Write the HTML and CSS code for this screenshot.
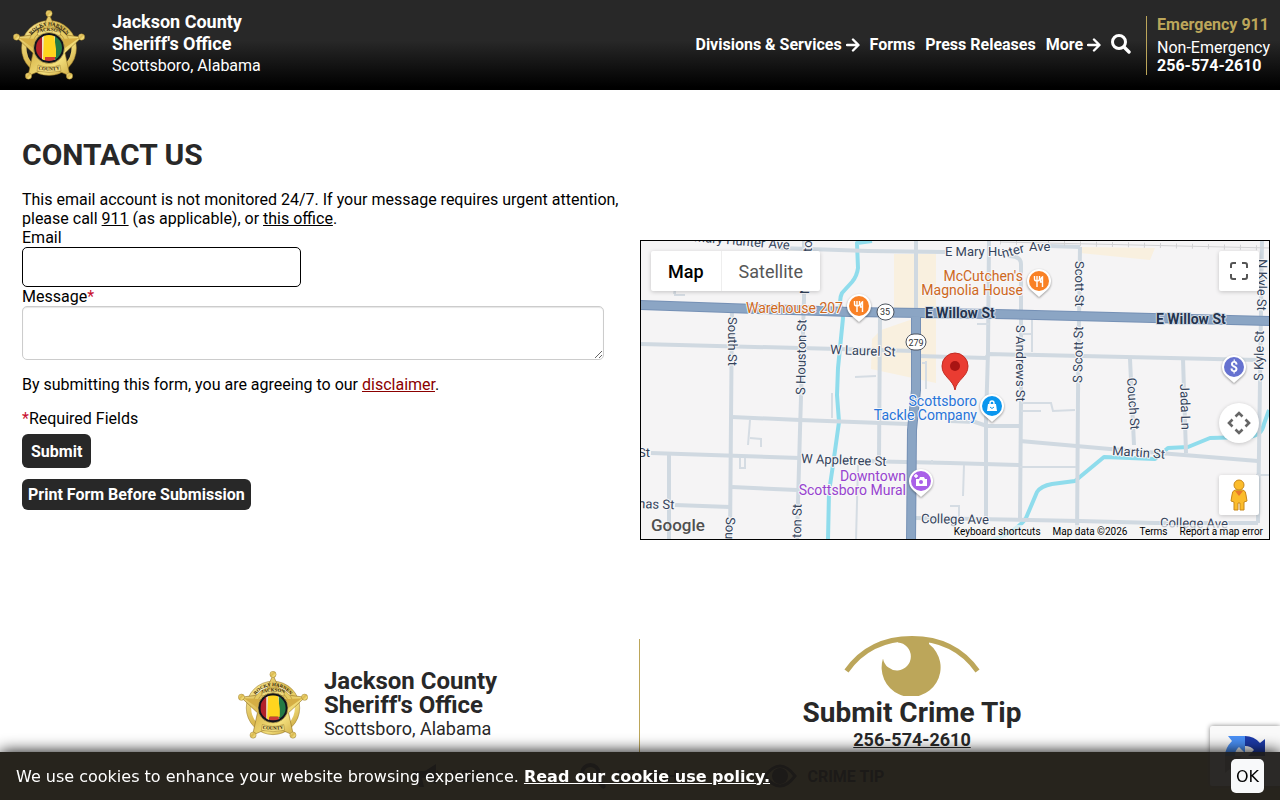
FILE: index.html
```html
<!DOCTYPE html>
<html lang="en">
<head>
    <meta charset="UTF-8">
    <meta name="viewport" content="width=device-width, initial-scale=1.0">
    <title>Contact Us - Jackson County Sheriff's Office</title>
    <link rel="stylesheet" href="styles.css">
</head>
<body>

<!-- Shared badge artwork -->
<svg class="defs" width="0" height="0" aria-hidden="true">
    <defs>
        <linearGradient id="gold" x1="0" y1="0" x2="1" y2="1">
            <stop offset="0" stop-color="#f8ea98"/>
            <stop offset=".45" stop-color="#dbb94f"/>
            <stop offset=".7" stop-color="#f3df7c"/>
            <stop offset="1" stop-color="#c29a33"/>
        </linearGradient>
        <clipPath id="seal-clip"><circle cx="36" cy="38" r="13"/></clipPath>
        <path id="arc-top" d="M14.500 37 A21.500 21.500 0 0 1 57.500 37"/>
        <path id="arc-mid" d="M22 24 Q36 18 50 24"/>
        <path id="arc-low" d="M23 59 Q36 62 49 59"/>
        <symbol id="badge" viewBox="0 0 72 70">
            <circle cx="36" cy="38" r="25" fill="none" stroke="url(#gold)" stroke-width="5"/>
            <circle cx="36" cy="38" r="27.500" fill="none" stroke="#8d6d20" stroke-width=".5"/>
            <path d="M36 4 L45 24 L69 27 L52 43 L57 66 L36 57 L15 66 L20 43 L3 27 L27 24 Z" fill="url(#gold)" stroke="#8d6d20" stroke-width=".6"/>
            <path d="M15 32 A22 22 0 0 1 57 32 L52 31 A17 17 0 0 0 20 31 Z" fill="#e6cb62" stroke="#8d6d20" stroke-width=".4"/>
            <path d="M6 28 L24 29 L20 38 Z M66 28 L48 29 L52 38 Z" fill="#d5ae44"/>
            <g fill="url(#gold)" stroke="#8d6d20" stroke-width=".4">
                <circle cx="36" cy="3.500" r="3.200"/><circle cx="3.500" cy="27" r="3.200"/><circle cx="68.500" cy="27" r="3.200"/>
                <circle cx="15.500" cy="66" r="3.200"/><circle cx="56.500" cy="66" r="3.200"/>
            </g>
            <path d="M24 21 Q36 16 48 21 L47 26 Q36 21 25 26 Z M25 55 Q36 59 47 55 L48 61 Q36 64 24 61 Z" fill="#efd97c" stroke="#8d6d20" stroke-width=".4"/>
            <circle cx="36" cy="38" r="15.500" fill="#11131c" stroke="#d9bd58" stroke-width=".7"/>
            <g clip-path="url(#seal-clip)">
                <path d="M23 25h8v26h-8z" fill="#b3202a"/>
                <path d="M29 25h3v26h-3zM41 25h2v26h-2z" fill="#eee3c8"/>
                <path d="M42 25h8v26h-8z" fill="#237a45"/>
                <path d="M31 25h10l2 14v8H33l-1 3h-2z" fill="#ffd51e"/>
                <path d="M32 47h10v4H32z" fill="#cf3f36"/>
            </g>
            <g class="badge-text">
                <text><textPath href="#arc-top" startOffset="50%">ROCKY HARNEN</textPath></text>
                <text><textPath href="#arc-mid" startOffset="50%">JACKSON</textPath></text>
                <text><textPath href="#arc-low" startOffset="50%">COUNTY</textPath></text>
            </g>
        </symbol>
        <symbol id="arrow" viewBox="0 0 14 14">
            <path d="M1 7h11M7 1.500l5.500 5.500-5.500 5.500" fill="none" stroke="currentColor" stroke-width="2.400" stroke-linecap="round" stroke-linejoin="round"/>
        </symbol>
        <symbol id="search" viewBox="0 0 20 20">
            <circle cx="8" cy="8" r="6.500" fill="none" stroke="currentColor" stroke-width="3"/>
            <path d="M13 13l5 5" stroke="currentColor" stroke-width="3.400" stroke-linecap="round"/>
        </symbol>
    </defs>
</svg>

<header class="site-header">
    <a class="brand" href="#">
        <svg class="badge"><use href="#badge"/></svg>
        <span class="brand-text"><strong>Jackson County<br>Sheriff's Office</strong><span>Scottsboro, Alabama</span></span>
    </a>
    <nav class="main-nav">
        <a href="#">Divisions &amp; Services <svg class="arrow"><use href="#arrow"/></svg></a>
        <a href="#">Forms</a>
        <a href="#">Press Releases</a>
        <a href="#">More <svg class="arrow"><use href="#arrow"/></svg></a>
        <a href="#" aria-label="Search"><svg class="search"><use href="#search"/></svg></a>
    </nav>
    <div class="phones">
        <a class="emergency" href="tel:911">Emergency 911</a>
        <a class="non-emergency" href="tel:2565742610">Non-Emergency<br><strong>256-574-2610</strong></a>
    </div>
</header>

<main class="contact">
    <section class="contact-form">
        <h1>CONTACT US</h1>
        <form>
            <p class="intro">This email account is not monitored 24/7. If your message requires urgent attention, please call <a href="tel:911">911</a> (as applicable), or <a href="#">this office</a>.</p>
            <label for="email">Email</label>
            <input type="email" id="email">
            <label for="message">Message<span class="star">*</span></label>
            <textarea id="message"></textarea>
            <p>By submitting this form, you are agreeing to our <a class="disclaimer" href="#">disclaimer</a>.</p>
            <p><span class="star">*</span>Required Fields</p>
            <button class="btn btn-submit" type="submit">Submit</button>
            <button class="btn btn-print" type="button">Print Form Before Submission</button>
        </form>
    </section>

    <section class="map">
        <svg class="map-art" viewBox="641 241 628 298" preserveAspectRatio="xMidYMid slice">
            <path fill="#f5f4f5" d="M641 241h628v298H641z"/>
            <path class="area" d="M894 254h42v57h-42zM881 330l55-19v72l-65-14 1-30zM1078 247l77 1-5 12-70-7z"/>

            <!-- Water -->
            <g class="water">
                <path d="M872 241L857 243L858 268Q857 276 852 282L842 293Q839 299 841 306L843 318L838 368L837 395L839 422L833 465L829 492L828 540"/>
                <path d="M990 541Q1018 531 1026 518L1037 492Q1041 486 1052 484L1075 481L1104 457L1155 459L1168 448L1188 447L1210 438L1248 437Q1262 436 1264 424L1269 410"/>
            </g>

            <!-- Side streets -->
            <g class="road">
                <path d="M780 248L868 251L945 252M1050 246L1080 247"/>
                <path d="M804 241V300L800 430L797 540M732 305L731 420L730 540M669 455V540M916 241V312M880 315L879 457"/>
                <path d="M641 344L915 351M918 356L986 358L989 354L1258 360M732 417L800 420L908 424M950 421L975 422L987 426L1020 426"/>
                <path d="M651 453L800 458M860 461L950 463L1020 465M732 487L797 490M675 505L730 507"/>
                <path d="M989 241L988 352L986 420V519M1008 256Q1021 256 1021 264V400L1020 519M1080 247L1078 395L1077 540M1262 241L1258 523"/>
                <path d="M1130 359L1134 445M1183 359L1186 453M1020 441L1110 449L1258 461M915 518L1080 521L1155 523H1258"/>
            </g>
            <g class="lane">
                <path d="M674 294l2-10M675 287v8h10M855 377l21-1M832 393v25M750 420l-2 25M750 438l11 1v8M740 458v11M741 468h4v-10M858 465l-2 75"/>
                <path d="M932 463v-3M964 465l-1 31M950 506h9v12M926 361v28M926 363h-4M977 324h12M1032 318v34M1021 334h11M1021 403h30l2 8 22-1M1021 411h20M1020 467h56M1256 475h14"/>
            </g>
            <g class="rail">
                <path d="M1000 242L1270 248"/>
                <path stroke-dasharray="1 15" stroke-width="5" d="M1000 242L1270 248"/>
            </g>

            <!-- Highways -->
            <path class="highway-edge" d="M639 305L850 312L995 314L1271 321M916 312V390L912 430L911 541"/>
            <path class="highway" d="M639 305L850 312L995 314L1271 321M916 312V390L912 430L911 541"/>

            <g class="shield">
                <rect x="877" y="304" width="17" height="16" rx="8"/><text x="885" y="315">35</text>
                <rect x="906" y="334" width="20" height="16" rx="8"/><text x="916" y="346">279</text>
            </g>

            <!-- Street names -->
            <g class="street">
                <text transform="translate(679 240) rotate(5)">W Mary Hunter Ave</text>
                <text x="945" y="256">E Mary Hu</text><text transform="translate(1003 258) rotate(-15)">nter</text><text x="1029" y="251">Ave</text>
                <text x="830" y="354" transform="rotate(2 830 354)">W Laurel St</text>
                <text x="801" y="463" transform="rotate(2 801 463)">W Appletree St</text>
                <text x="638" y="457">St</text><text x="638" y="508" transform="rotate(2 638 508)">nas St</text>
                <text x="921" y="523" transform="rotate(1 921 523)">College Ave</text><text x="1160" y="527" transform="rotate(1 1160 527)">College Ave</text>
                <text x="1112" y="455" transform="rotate(4 1112 455)">Martin St</text>
                <text transform="translate(728 317) rotate(90)">South St</text>
                <text transform="translate(805 395) rotate(-89)">S Houston St</text>
                <text transform="translate(812 252) rotate(-90)">to</text><text transform="translate(809 294) rotate(-90)">N</text>
                <text transform="translate(726 517) rotate(92)">South St</text>
                <text transform="translate(801 538) rotate(-89)">ton St</text>
                <text transform="translate(1016 325) rotate(90)">S Andrews St</text>
                <text transform="translate(1075 261) rotate(90)">Scott St</text><text transform="translate(1082 383) rotate(-89)">S Scott St</text>
                <text transform="translate(1258 259) rotate(91)">N Kyle St</text><text transform="translate(1263 381) rotate(-89)">S Kyle St</text>
                <text transform="translate(1127 378) rotate(86)">Couch St</text><text transform="translate(1180 384) rotate(88)">Jada Ln</text>
            </g>
            <g class="street major">
                <text x="925" y="318">E Willow St</text><text x="1156" y="324">E Willow St</text>
            </g>

            <!-- Places -->
            <g class="place food">
                <text x="843" y="313">Warehouse 207</text>
                <text x="1023" y="281">McCutchen's</text><text x="1023" y="295">Magnolia House</text>
            </g>
            <g class="place shop"><text x="977" y="406">Scottsboro</text><text x="977" y="420">Tackle Company</text></g>
            <g class="place art"><text x="906" y="481">Downtown</text><text x="906" y="495">Scottsboro Mural</text></g>

            <g class="pin"><path d="M859 322l-8-7a12 12 0 1 1 16 0z"/><circle cx="859" cy="306" r="10" fill="#f98125"/>
                <path d="M854.500 301v3q0 2 2.500 2t2.500-2v-3M857 301v11M862.500 312v-10q-2 1-2 5h2" class="glyph"/></g>
            <g class="pin"><path d="M1039 297l-8-7a12 12 0 1 1 16 0z"/><circle cx="1039" cy="281" r="10" fill="#f98125"/>
                <path d="M1034.500 276v3q0 2 2.500 2t2.500-2v-3M1037 276v11M1042.500 287v-10q-2 1-2 5h2" class="glyph"/></g>
            <g class="pin"><path d="M992 422l-8-7a12 12 0 1 1 16 0z"/><circle cx="992" cy="406" r="10" fill="#0b96ee"/>
                <path d="M988 404h8l1 7h-10z" fill="#fff"/><path d="M990 404v-1q0-2 2-2t2 2v1" class="glyph"/><path d="M990 407q2 3 4 0" fill="none" stroke="#0b96ee"/></g>
            <g class="pin"><path d="M921 497l-8-7a12 12 0 1 1 16 0z"/><circle cx="921" cy="481" r="10" fill="#a960e8"/>
                <path d="M916 479h3l1-2h4l1 2h2v7h-11z" fill="#fff"/><circle cx="921" cy="482" r="2" fill="#a960e8"/><path d="M916 474v4M914 476h4" class="glyph"/></g>
            <g class="pin"><path d="M1234 383l-8-7a12 12 0 1 1 16 0z"/><circle cx="1234" cy="367" r="10" fill="#6672d0"/>
                <text class="dollar" x="1234" y="372">$</text></g>

            <!-- Office marker -->
            <path d="M955 390C953 379 942 377 942 366a13 13 0 0 1 26 0C968 377 957 379 955 390z" fill="#ea3c32" stroke="#c22b22"/>
            <circle cx="955" cy="366" r="5" fill="#a91413"/>
        </svg>

        <div class="map-types">
            <button class="map-type active" type="button">Map</button>
            <button class="map-type" type="button">Satellite</button>
        </div>
        <button class="map-btn fullscreen" type="button" aria-label="Toggle fullscreen view">
            <svg width="18" height="18" viewBox="0 0 18 18"><path d="M1 6V3q0-2 2-2h3M12 1h3q2 0 2 2v3M17 12v3q0 2-2 2h-3M6 17H3q-2 0-2-2v-3" fill="none" stroke="#555" stroke-width="2"/></svg>
        </button>
        <button class="map-btn camera" type="button" aria-label="Map camera controls">
            <svg width="24" height="24" viewBox="0 0 24 24"><path d="M8.500 5.500L12 2l3.500 3.500M8.500 18.500L12 22l3.500-3.500M5.500 8.500L2 12l3.500 3.500M18.500 8.500L22 12l-3.500 3.500" fill="none" stroke="#666" stroke-width="2.600"/></svg>
        </button>
        <button class="map-btn pegman" type="button" aria-label="Street View">
            <svg width="18" height="32" viewBox="0 0 18 32"><path d="M5 11h8q3 1 3 5l1 6-3 1v8H10v-7H8v7H4v-8l-3-1 1-6q0-4 3-5z" fill="#fbbc2b" stroke="#c8871a"/><path d="M5 12l4 5 4-5z" fill="#e8792b"/><circle cx="9" cy="6" r="5" fill="#fbbc2b" stroke="#c8871a"/></svg>
        </button>
        <span class="google">Google</span>
        <div class="map-legal">
            <button type="button">Keyboard shortcuts</button>
            <span>Map data ©2026</span>
            <a href="#">Terms</a>
            <a href="#">Report a map error</a>
        </div>
    </section>
</main>

<footer class="site-footer">
    <a class="footer-brand" href="#">
        <svg class="badge"><use href="#badge"/></svg>
        <span class="brand-text"><strong>Jackson County<br>Sheriff's Office</strong><span>Scottsboro, Alabama</span></span>
    </a>
    <div class="crime-tip">
        <svg width="136" height="60" viewBox="0 0 136 60">
            <path d="M2.500 35C18 13 41 2.500 68 2.500S118 13 133.500 35" fill="none" stroke="#bca65a" stroke-width="5"/>
            <path d="M54 3h31v5A29.500 29.500 0 1 1 39 22.500A14 14 0 1 0 54 6.500z" fill="#bca65a"/>
        </svg>
        <a class="tip-title" href="#">Submit Crime Tip</a>
        <a class="tip-phone" href="tel:2565742610">256-574-2610</a>
    </div>
</footer>


<nav class="quick-links">
    <a href="#"><svg width="28" height="26" viewBox="0 0 28 26"><path d="M1 8h12l11-7v20l-11-6h-3l2 9H7L5 15H1zM25 7q4 4 0 8" fill="currentColor"/></svg>NEWS</a>
    <a href="#"><svg width="26" height="26"><use href="#search"/></svg>SEARCH</a>
    <a href="#"><svg width="34" height="24" viewBox="0 0 34 24"><path d="M2 12Q17-8 32 12Q17 32 2 12z" fill="none" stroke="currentColor" stroke-width="3"/><circle cx="17" cy="12" r="8" fill="currentColor"/></svg>CRIME TIP</a>
</nav>

<div class="recaptcha">
    <svg width="40" height="40" viewBox="0 0 40 40">
        <path d="M20 0q9 0 15 7l5-4v17H23l6-6q-3-4-9-4z" fill="#1c3aa9"/>
        <path d="M0 20Q0 12 7 5L3 0h17v17l-6-6q-4 3-4 9z" fill="#4a90f5"/>
        <path d="M0 20h17l-6 6q4 4 9 4 4 0 7-4l7 6q-6 8-14 8-9 0-15-7l-5 4z" fill="#ababab"/>
    </svg>
</div>

<div class="cookie-bar">
    <p>We use cookies to enhance your website browsing experience. <a href="#">Read our cookie use policy.</a></p>
    <button type="button">OK</button>
</div>

</body>
</html>
```
FILE: styles.css
```css
* {
    box-sizing: border-box;
}

body {
    margin: 0;
    font-family: Roboto, "Liberation Sans", sans-serif;
    font-size: 16px;
    line-height: 19px;
    color: #000;
    background-color: #fff;
}

a {
    color: inherit;
}

button {
    font-family: inherit;
    cursor: pointer;
}

.defs {
    position: absolute;
}

.badge-text {
    font-family: "Liberation Serif", serif;
    font-size: 5px;
    font-weight: bold;
    text-anchor: middle;
    fill: #34270c;
}

/* Header */
.site-header {
    display: flex;
    align-items: center;
    height: 90px;
    padding: 0 10px 0 13px;
    color: #fff;
    background: linear-gradient(#282828 0%, #282828 45%, #000 97%);
}

.site-header a {
    text-decoration: none;
}

.brand {
    display: flex;
    align-items: center;
    gap: 27px;
    margin-right: auto;
}

.brand .badge {
    width: 72px;
    height: 70px;
}

.brand-text {
    padding-bottom: 3px;
    font-size: 16px;
    line-height: 22px;
}

.brand-text strong,
.brand-text span {
    display: block;
}

.brand-text strong {
    font-size: 18px;
}

.main-nav {
    display: flex;
    align-items: center;
    gap: 10px;
    padding-bottom: 2px;
    font-weight: bold;
}

.main-nav .arrow {
    width: 14px;
    height: 14px;
    vertical-align: -2px;
}

.main-nav .search {
    display: block;
    width: 20px;
    height: 20px;
}

.phones {
    display: flex;
    flex-direction: column;
    gap: 5px;
    margin-left: 15px;
    padding-left: 10px;
    border-left: 1px solid #bca65a;
    line-height: 18px;
}

.emergency {
    color: #bca65a;
    font-weight: bold;
}

/* Contact */
.contact {
    display: grid;
    grid-template-columns: 1fr 1fr;
    align-items: start;
}

.contact-form {
    padding: 47px 10px 0 22px;
}

h1 {
    margin: 0 0 17px;
    font-size: 30px;
    line-height: 36px;
    color: #282828;
}

.contact-form p {
    margin: 15px 0;
}

.contact-form .intro {
    margin: 0;
}

.contact-form label {
    display: block;
}

.contact-form input,
.contact-form textarea {
    display: block;
    border-radius: 5px;
    font: inherit;
    background-color: #fff;
}

.contact-form input {
    width: 279px;
    height: 40px;
    border: 1px solid #000;
}

.contact-form textarea {
    width: 582px;
    max-width: 100%;
    height: 54px;
    border: 1px solid #ccc;
    box-shadow: inset 0 1px 1px rgba(0,0,0,0.1);
}

.star {
    color: #c8102e;
}

.disclaimer {
    color: #8b0000;
}

.contact-form p:last-of-type {
    margin-bottom: 6px;
}

.btn {
    display: block;
    border: 0;
    border-radius: 6px;
    font-size: 16px;
    font-weight: bold;
    color: #fff;
    background-color: #282828;
}

.btn-submit {
    height: 34px;
    margin-bottom: 11px;
    padding: 0 9px;
}

.btn-print {
    height: 31px;
    padding: 0 6px;
}

/* Map */
.map {
    position: relative;
    height: 300px;
    margin: 150px 10px 0 0;
    border: 1px solid #000;
    overflow: hidden;
}

.map-art {
    display: block;
    width: 100%;
    height: 100%;
}

.area {
    fill: #f9f0df;
}

.water {
    fill: none;
    stroke: #8fdcec;
    stroke-width: 4;
    stroke-linejoin: round;
}

.road {
    fill: none;
    stroke: #d0d9e1;
    stroke-width: 4;
}

.lane {
    fill: none;
    stroke: #d5dce3;
    stroke-width: 2;
}

.rail {
    fill: none;
    stroke: #d2d2d4;
}

.highway-edge {
    fill: none;
    stroke: #7590b5;
    stroke-width: 10;
}

.highway {
    fill: none;
    stroke: #8ba5c4;
    stroke-width: 8;
}

.street,
.place {
    font-size: 13px;
    fill: #35445c;
    stroke: #f7f7f8;
    stroke-width: 2px;
    stroke-linejoin: round;
    paint-order: stroke;
}

.major {
    font-size: 14px;
    font-weight: bold;
    fill: #24344f;
    stroke: #d3dce6;
}

.place {
    font-size: 14px;
    text-anchor: end;
}

.food {
    fill: #ce681e;
}

.shop {
    fill: #2874d8;
}

.art {
    fill: #9743cf;
}

.shield rect {
    fill: #fff;
    stroke: #4e5560;
}

.shield text {
    font-size: 9px;
    text-anchor: middle;
    fill: #333;
}

.pin {
    fill: #fff;
    filter: drop-shadow(0 1px 1px rgba(0,0,0,0.4));
}

.glyph {
    fill: none;
    stroke: #fff;
    stroke-width: 1.4;
}

.dollar {
    font-size: 14px;
    font-weight: bold;
    text-anchor: middle;
}

.map-types {
    position: absolute;
    top: 10px;
    left: 10px;
    display: flex;
    border-radius: 2px;
    background-color: #fff;
    box-shadow: 0 1px 4px rgba(0,0,0,0.2);
}

.map-type {
    height: 40px;
    padding: 0 17px;
    border: 0;
    font-size: 18px;
    color: #565656;
    background: none;
}

.map-type.active {
    border-right: 1px solid #eee;
    font-weight: 500;
    color: #000;
}

.map-btn {
    position: absolute;
    right: 10px;
    display: flex;
    align-items: center;
    justify-content: center;
    width: 40px;
    height: 40px;
    padding: 0;
    border: 0;
    border-radius: 2px;
    background-color: #fff;
    box-shadow: 0 1px 4px rgba(0,0,0,0.2);
}

.fullscreen {
    top: 10px;
}

.camera {
    bottom: 96px;
    border-radius: 50%;
}

.pegman {
    bottom: 24px;
}

.google {
    position: absolute;
    bottom: 4px;
    left: 10px;
    font-size: 17px;
    font-weight: 500;
    color: #505050;
    text-shadow: 0 0 2px #fff;
}

.map-legal {
    position: absolute;
    right: 0;
    bottom: 0;
    display: flex;
    gap: 12px;
    padding: 0 6px;
    font-size: 10px;
    line-height: 14px;
    background-color: rgba(245,245,245,0.7);
}

.map-legal button {
    padding: 0;
    border: 0;
    font-size: inherit;
    line-height: inherit;
    color: inherit;
    background: none;
}

.map-legal a {
    text-decoration: none;
}

/* Footer */
.site-footer {
    display: grid;
    grid-template-columns: 1fr 1fr;
    width: 85%;
    margin: 96px auto 0;
    color: #282828;
}

.footer-brand {
    display: flex;
    align-items: center;
    justify-content: center;
    gap: 16px;
    min-height: 132px;
    margin-top: 3px;
    border-right: 1px solid #bca65a;
    text-decoration: none;
}

.footer-brand .badge {
    width: 70px;
    height: 68px;
}

.footer-brand .brand-text {
    padding: 0;
    font-size: 18px;
    line-height: 24px;
}

.footer-brand strong {
    font-size: 24px;
}

.crime-tip {
    display: flex;
    flex-direction: column;
    align-items: center;
    font-weight: bold;
}

.tip-title {
    font-size: 28px;
    line-height: 33px;
    text-decoration: none;
}

.tip-phone {
    font-size: 18px;
    line-height: 22px;
}

/* Fixed bars */
.quick-links {
    position: fixed;
    right: 0;
    bottom: 0;
    left: 0;
    display: flex;
    align-items: center;
    justify-content: center;
    gap: 86px;
    height: 48px;
    padding-left: 16px;
    font-weight: bold;
    color: #000;
    background-color: #bca65a;
}

.quick-links a {
    display: flex;
    align-items: center;
    gap: 10px;
    text-decoration: none;
}

.recaptcha {
    position: fixed;
    right: 0;
    bottom: 14px;
    width: 70px;
    height: 60px;
    padding: 10px 15px;
    border-radius: 2px 0 0 2px;
    background-color: #f9f9f9;
    box-shadow: 0 0 5px #808080;
}

.cookie-bar {
    position: fixed;
    right: 0;
    bottom: 0;
    left: 0;
    display: flex;
    align-items: center;
    justify-content: space-between;
    height: 48px;
    padding: 0 16px;
    font-family: "DejaVu Sans", sans-serif;
    color: #fff;
    background-color: rgba(30,28,26,0.94);
    box-shadow: 0 0 16px #000;
}

.cookie-bar p {
    margin: 0;
}

.cookie-bar a {
    font-weight: bold;
}

.cookie-bar button {
    height: 34px;
    padding: 0 5px;
    border: 0;
    border-radius: 5px;
    font-size: 16px;
    background-color: #f8f9fa;
}
```
